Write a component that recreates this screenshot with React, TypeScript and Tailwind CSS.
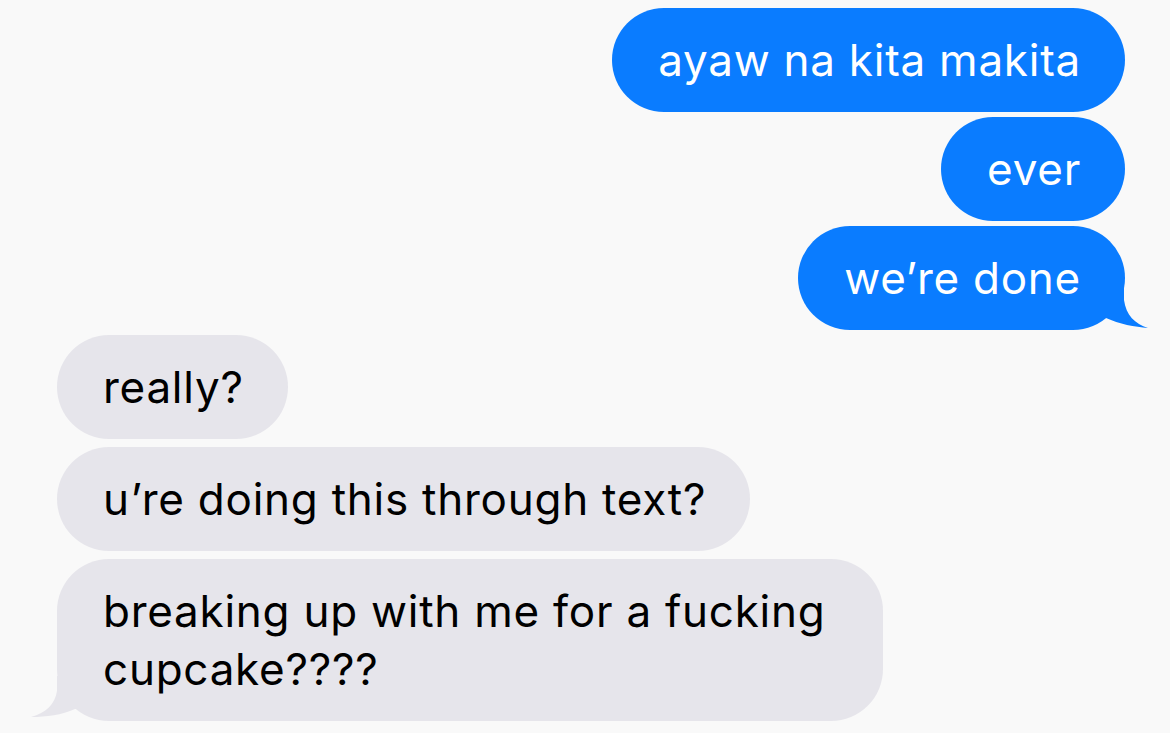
import React from 'react';

type Msg = { text: string; mine: boolean; tail?: boolean };

const messages: Msg[] = [
    { text: 'ayaw na kita makita', mine: true },
    { text: 'ever', mine: true },
    { text: 'we\u2019re done', mine: true, tail: true },
    { text: 'really?', mine: false },
    { text: 'u\u2019re doing this through text?', mine: false },
    { text: 'breaking up with me for a fucking cupcake????', mine: false, tail: true },
];

function Tail({ mine }: { mine: boolean }) {
    // curled tail under the last bubble of a group
    if (mine) {
        return (
            <svg className="absolute right-[-24px] bottom-0" width="50" height="45" viewBox="0 0 50 45">
                <path d="M25 0 L25 15 C27 30 36 39 49 43 C36 42 20 39 7 33 L0 33 L0 0 Z" fill="#0a7cff" />
            </svg>
        );
    }
    return (
        <svg className="absolute left-[-27px] bottom-0" width="50" height="45" viewBox="0 0 50 45">
            <path d="M27 0 L27 15 C25 28 16 37 1 41 C16 41 32 39 45 33 L50 33 L50 0 Z" fill="#e6e5eb" />
        </svg>
    );
}

export default function App() {
    return (
        <div className="w-[1170px] h-[733px] overflow-hidden bg-[#f9f9f9] pt-[8px] pr-[45px] pl-[57px] flex flex-col font-['Inter','Roboto',sans-serif]">
            {messages.map((m, i) => (
                <div
                    key={i}
                    className={`flex ${m.mine ? 'justify-end' : 'justify-start'} ${
                        i === 0 ? '' : i >= 4 ? 'mt-[8px]' : 'mt-[5px]'
                    }`}
                >
                    <div
                        className={`relative rounded-[52px] pl-[46px] pr-[44px] py-[23px] text-[44px] leading-[58px] tracking-[0.75px] ${
                            m.mine ? 'bg-[#0a7cff] text-white' : 'bg-[#e6e5eb] text-black max-w-[826px]'
                        }`}
                    >
                        {m.tail && <Tail mine={m.mine} />}
                        <span className="relative">{m.text}</span>
                    </div>
                </div>
            ))}
        </div>
    );
}
